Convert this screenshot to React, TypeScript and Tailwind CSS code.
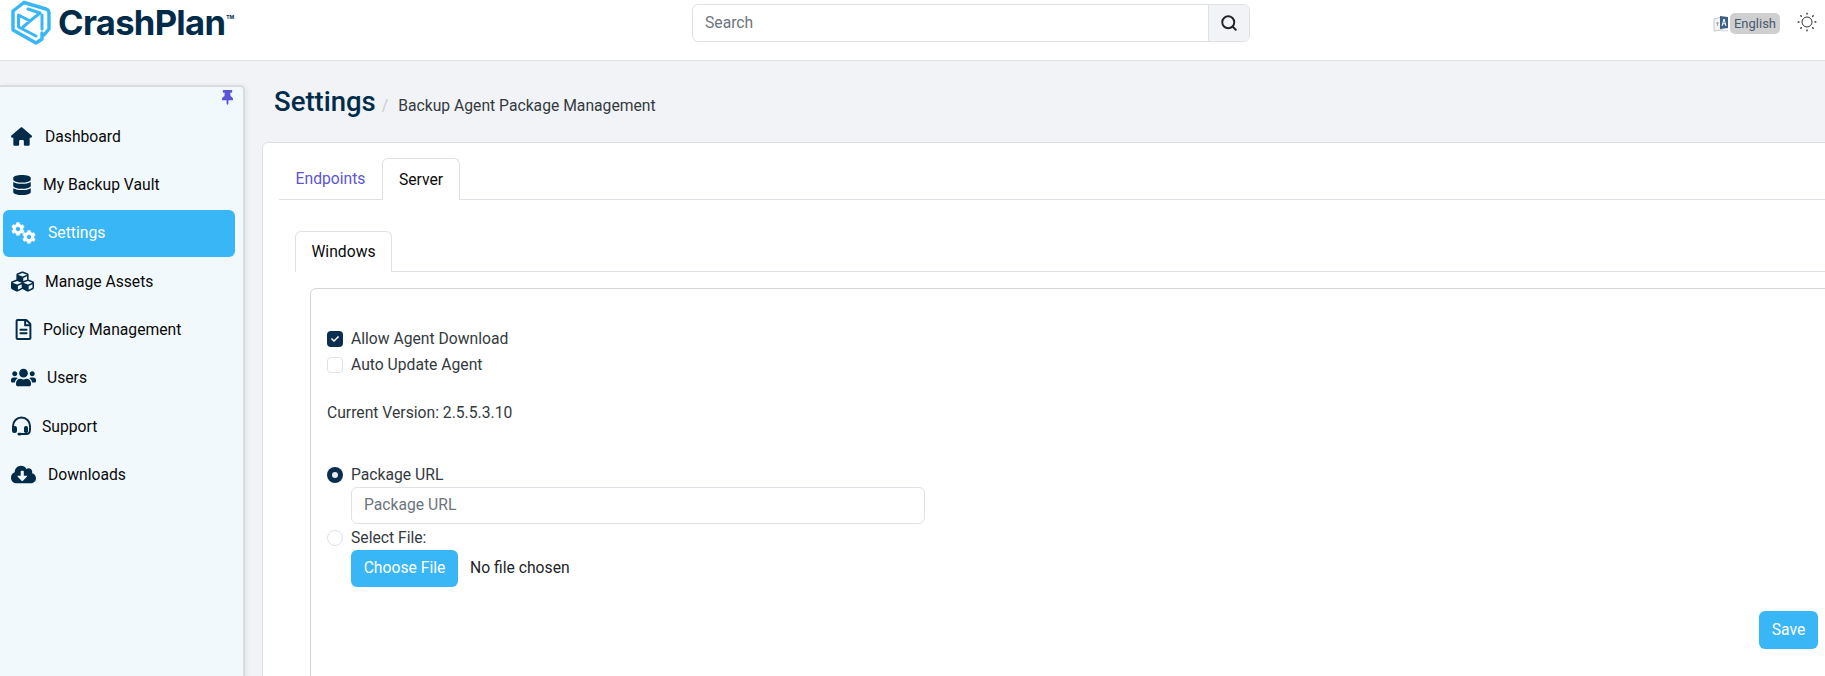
import React from "react";
import { FaRegFileAlt, FaUsers, FaCubes, FaDatabase, FaCog, FaThumbtack, FaCheck, FaCloudDownloadAlt } from "react-icons/fa";
import { FaHouse } from "react-icons/fa6";
import { LuSearch } from "react-icons/lu";

const navy = "#002b49";

function Logo() {
  return (
    <svg width="42" height="46" viewBox="0 0 42 46" fill="none" stroke="#38b6f6" strokeWidth="3.4" strokeLinejoin="round" strokeLinecap="round">
      <path d="M14 2.5 L3 11 V30 L26 43 L32 39 V33" />
      <path d="M14 2.5 L36 9 Q39 10 39 13 V29 L34 35" />
      <path d="M8.5 15 V27 L26 36 M8.5 15 L20 21 L30 13 M20 21 L13 27 M32 15 V29 M18 9 L30 13" strokeWidth="3" />
    </svg>
  );
}

function Translate() {
  return (
    <svg width="17" height="18" viewBox="0 0 17 18">
      <path d="M1 4 L9 2 V15 L1 16Z" fill="#f4f4f4" stroke="#bcbcbc" strokeWidth="0.8" />
      <path d="M7 1 L15 2 V13 L7 14Z" fill="#3d5f86" />
      <path d="M11 4 L13 11 M11 4 L9 11 M9.8 8.8 H12.4" stroke="#fff" strokeWidth="1" fill="none" />
      <path d="M3 8 H6 M4.5 7 V11" stroke="#999" strokeWidth="0.8" fill="none" />
      <path d="M8 15 L15 15 V16.5 H8Z" fill="#e3e3e3" />
    </svg>
  );
}

function Sun() {
  return (
    <svg width="20" height="20" viewBox="0 0 20 20" fill="none" stroke="#333" strokeWidth="1">
      <circle cx="10" cy="10" r="5" />
      <g strokeWidth="1.4" strokeLinecap="round">
        <path d="M10 1.2V2M10 18V18.8M1.2 10H2M18 10H18.8M3.8 3.8L4.3 4.3M15.7 15.7L16.2 16.2M3.8 16.2L4.3 15.7M15.7 4.3L16.2 3.8" />
      </g>
    </svg>
  );
}

function Gears({ color }: { color: string }) {
  return (
    <span className="relative block h-[22px] w-[25px]">
      <span className="absolute left-0 top-0"><FaCog size={14} color={color} /></span>
      <span className="absolute bottom-0 right-0"><FaCog size={14} color={color} /></span>
    </span>
  );
}

function Headset({ color }: { color: string }) {
  return (
    <svg width="21" height="21" viewBox="0 0 21 21" fill="none">
      <path d="M2 12 V10 A8.5 8.5 0 0 1 19 10 V14 Q19 18 15 18 H9" stroke={color} strokeWidth="1.9" />
      <rect x="1" y="10" width="5" height="7" rx="2.2" fill={color} />
      <rect x="13" y="10" width="4" height="7" rx="1.8" fill={color} />
      <rect x="6.5" y="16.8" width="4" height="2.6" rx="1.3" fill={color} />
    </svg>
  );
}

const nav = [
  { label: "Dashboard", icon: (c: string) => <FaHouse size={21} color={c} />, slot: "w-[34px]", pl: "pl-[8px]" },
  { label: "My Backup Vault", icon: (c: string) => <FaDatabase size={20} color={c} />, slot: "w-[31px]", pl: "pl-[9px]" },
  { label: "Settings", icon: (c: string) => <Gears color={c} />, slot: "w-[37px]", pl: "pl-[8px]", active: true },
  { label: "Manage Assets", icon: (c: string) => <FaCubes size={23} color={c} />, slot: "w-[34px]", pl: "pl-[8px]" },
  { label: "Policy Management", icon: (c: string) => <FaRegFileAlt size={21} color={c} />, slot: "w-[30px]", pl: "pl-[10px]" },
  { label: "Users", icon: (c: string) => <FaUsers size={25} color={c} />, slot: "w-[36px]", pl: "pl-[8px]" },
  { label: "Support", icon: (c: string) => <Headset color={c} />, slot: "w-[31px]", pl: "pl-[8px]" },
  { label: "Downloads", icon: (c: string) => <FaCloudDownloadAlt size={25} color={c} />, slot: "w-[37px]", pl: "pl-[8px]" },
];

export default function App() {
  return (
    <div className="h-[676px] w-[1825px] overflow-hidden bg-[#f1f3f7] font-['Roboto',sans-serif] text-[15.7px] text-[#212529]">
      <header className="relative flex h-[61px] items-start border-b border-[#dee2e6] bg-white">
        <div className="flex w-[692px] items-start pl-[10px]">
          <Logo />
          <span className="ml-[6px] font-['Inter',sans-serif] text-[34.6px] leading-[44px] font-bold tracking-[-0.7px] text-[#002b49]">CrashPlan</span>
          <span className="mt-[15px] ml-[1px] font-['Inter',sans-serif] text-[5px] leading-none font-bold text-[#002b49]">TM</span>
        </div>
        <div className="mt-[4px] flex h-[38px] w-[558px] overflow-hidden rounded-[6px] border border-[#dee2e6]">
          <div className="flex flex-1 items-center pl-[12px] text-[#6c757d]">Search</div>
          <div className="flex w-[41px] items-center justify-center border-l border-[#dee2e6] bg-[#f1f3f7]">
            <LuSearch size={18} color="#212529" strokeWidth={2.6} />
          </div>
        </div>
        <div className="ml-auto mt-[13px] flex items-center pr-[8px]">
          <Translate />
          <span className="rounded-[5px] bg-[#cfcfcf] px-[4px] py-[2px] text-[13px] leading-[17px] text-[#495a72]">English</span>
          <span className="ml-[17px] -mt-[3px]"><Sun /></span>
        </div>
      </header>

      <div className="flex h-[615px]">
        <aside className="relative mt-[24px] h-[600px] w-[245px] shrink-0 rounded-tr-[5px] border-t-2 border-r-2 border-[#dcdcdc] bg-[#f1f9fd] pt-[26px] pl-[3px] pr-[8px] shadow-[2px_0_4px_rgba(0,0,0,0.06)]">
          <span className="absolute right-[8px] top-[3px]"><FaThumbtack size={15} color="#5a55d6" /></span>
          <nav className="flex flex-col gap-[1.3px]">
            {nav.map(({ label, icon, slot, pl, active }) => (
              <div key={label} className={`flex h-[47px] items-center rounded-[6px] ${pl} ${active ? "bg-[#38b6f6] text-white" : "text-[#0a0a0a]"}`}>
                <span className={`${slot} flex shrink-0 items-center`}>
                  {icon(active ? "#ffffff" : navy)}
                </span>
                <span>{label}</span>
              </div>
            ))}
          </nav>
        </aside>

        <main className="min-w-0 flex-1 pl-[17px]">
          <div className="flex h-[81px] items-center pl-[12px] pt-[1px]">
            <h1 className="text-[27.5px] leading-[36px] font-medium text-[#002b49]">Settings</h1>
            <span className="ml-[6px] mt-[7px] text-[#c8ccd1]">/</span>
            <span className="ml-[10px] mt-[7px] text-[#343a40]">Backup Agent Package Management</span>
          </div>

          <section className="h-[560px] w-[1700px] rounded-[6px] border border-[#dcdfe4] bg-white pt-[15px] pl-[16px]">
            <div className="flex h-[42px] border-b border-[#dee2e6]">
              <div className="flex h-[41px] w-[103px] items-center justify-center text-[#5a55d6]">Endpoints</div>
              <div className="flex h-[42px] w-[78px] items-center justify-center rounded-t-[6px] border border-b-0 border-[#dee2e6] bg-white text-[#0a0a0a]">Server</div>
            </div>

            <div className="ml-[16px] mt-[31px] flex h-[41px] border-b border-[#dee2e6]">
              <div className="flex h-[41px] w-[97px] items-center justify-center rounded-t-[6px] border border-b-0 border-[#dee2e6] bg-white text-[#0a0a0a]">Windows</div>
            </div>

            <div className="mt-[16px] ml-[31px] h-[420px] w-[1600px] rounded-tl-[6px] border border-[#d6d6d6] pt-[37px] pl-[16px] text-[#343a40]">
              <label className="flex h-[26px] items-center">
                <span className="flex size-[16px] items-center justify-center rounded-[4px] bg-[#0b2e4f]"><FaCheck size={8} color="#fff" /></span>
                <span className="ml-[8px]">Allow Agent Download</span>
              </label>
              <label className="flex h-[26px] items-center">
                <span className="size-[16px] rounded-[4px] border border-[#dee2e6] bg-white" />
                <span className="ml-[8px]">Auto Update Agent</span>
              </label>
              <p className="mt-[24px] leading-[22px]">Current Version: 2.5.5.3.10</p>

              <label className="mt-[39px] flex h-[24px] items-center">
                <span className="flex size-[16px] items-center justify-center rounded-full bg-[#0b2e4f]"><span className="size-[6px] rounded-full bg-[#e8ecef]" /></span>
                <span className="ml-[8px]">Package URL</span>
              </label>
              <div className="ml-[24px] flex h-[37px] w-[574px] items-center rounded-[6px] border border-[#dee2e6] pl-[12px] pb-[1px] text-[#6c757d]">Package URL</div>
              <label className="mt-[2px] flex h-[24px] items-center">
                <span className="size-[16px] rounded-full border border-[#dee2e6] bg-white" />
                <span className="ml-[8px]">Select File:</span>
              </label>
              <div className="ml-[24px] flex items-center">
                <span className="flex h-[37px] w-[107px] items-center justify-center rounded-[6px] bg-[#38b6f6] pb-[1px] text-white">Choose File</span>
                <span className="ml-[12px] pb-[1px] text-[#212529]">No file chosen</span>
              </div>
              <div className="mt-[24px] flex w-[1491px] justify-end">
                <span className="flex h-[38px] w-[59px] items-center justify-center rounded-[6px] bg-[#38b6f6] text-white">Save</span>
              </div>
            </div>
          </section>
        </main>
      </div>
    </div>
  );
}
